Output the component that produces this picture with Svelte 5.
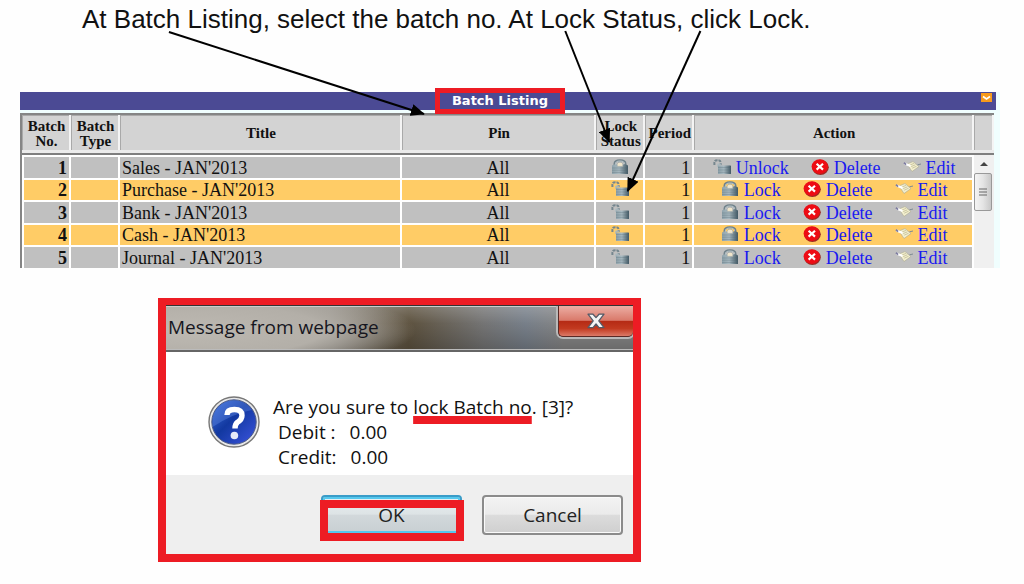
<script lang="ts">
	interface Batch {
		no: number;
		title: string;
		pin: string;
		locked: boolean;
		period: number;
	}

	const batches: Batch[] = [
		{ no: 1, title: "Sales - JAN'2013", pin: "All", locked: true, period: 1 },
		{ no: 2, title: "Purchase - JAN'2013", pin: "All", locked: false, period: 1 },
		{ no: 3, title: "Bank - JAN'2013", pin: "All", locked: false, period: 1 },
		{ no: 4, title: "Cash - JAN'2013", pin: "All", locked: false, period: 1 },
		{ no: 5, title: "Journal - JAN'2013", pin: "All", locked: false, period: 1 },
	];
</script>

{#snippet lockIcon(locked: boolean)}
	{#if locked}
		<svg class="icon" width="18" height="16" viewBox="0 0 18 16" aria-hidden="true">
			<path d="M3.6 8V4.8Q3.6 1.4 9 1.4T14.4 4.8V8" fill="none" stroke="#6f8189" stroke-width="2.2" />
			<path d="M4.4 7V4.8Q4.4 2 9 2T13.6 4.8" fill="none" stroke="#c9d4d8" stroke-width="0.8" />
			<path d="M1 6.6L3 5.4H15L17 6.6V15H1Z" fill="url(#steel)" />
			<path d="M1 9H17M1 11.2H17M1 13.4H17" stroke="#4c626d" stroke-width="0.6" opacity="0.5" />
			<path d="M6.2 7.4V5.2Q6.2 3.2 9 3.2T11.8 5.2V7.4Z" fill="#f1e6cc" stroke="#8c9a9f" stroke-width="0.5" />
		</svg>
	{:else}
		<svg class="icon" width="18" height="16" viewBox="0 0 18 16" aria-hidden="true">
			<path d="M1.4 6V3.6Q1.4 1.2 4.5 1.2T7.6 3.6V6" fill="none" stroke="#75868e" stroke-width="2" stroke-dasharray="3 .8" />
			<path d="M5 8V5.4Q6.5 4.5 8 5.4" fill="none" stroke="#a9b8be" stroke-width="1.4" />
			<rect x="5" y="6.4" width="13" height="8.6" rx="0.6" fill="url(#steel)" />
			<path d="M5 8.6H18M5 11H18M5 13.3H18" stroke="#4c626d" stroke-width="0.6" opacity="0.5" />
		</svg>
	{/if}
{/snippet}

<main class="guide">
	<p class="guide__step">At Batch Listing, select the batch no. At Lock Status, click Lock.</p>

	<section class="listing" aria-label="Batch Listing">
		<div class="listing__bar">
			<h2 class="listing__title">Batch Listing</h2>
			<button type="button" class="listing__toggle" aria-label="Collapse">
				<svg width="11" height="8" viewBox="0 0 11 8"><path d="M2 2.5L5.5 5L9 2.5" fill="none" stroke="#fff" stroke-width="1.6" /></svg>
			</button>
		</div>

		<table class="batches">
			<colgroup>
				<col class="col-small" />
				<col class="col-small" />
				<col class="col-title" />
				<col class="col-pin" />
				<col class="col-small" />
				<col class="col-small" />
				<col />
				<col class="col-scroll" />
			</colgroup>
			<thead>
				<tr>
					<th scope="col">Batch<br />No.</th>
					<th scope="col">Batch<br />Type</th>
					<th scope="col">Title</th>
					<th scope="col">Pin</th>
					<th scope="col">Lock<br />Status</th>
					<th scope="col">Period</th>
					<th scope="col">Action</th>
					<th></th>
				</tr>
			</thead>
			<tbody>
				{#each batches as batch, i}
					<tr>
						<td class="no">{batch.no}</td>
						<td></td>
						<td>{batch.title}</td>
						<td class="center">{batch.pin}</td>
						<td class="center">{@render lockIcon(batch.locked)}</td>
						<td class="period">{batch.period}</td>
						<td>
							<div class="actions">
								<a href="#lock">{@render lockIcon(!batch.locked)}{batch.locked ? "Unlock" : "Lock"}</a>
								<a href="#delete">
									<svg class="icon" width="18" height="16" viewBox="0 0 18 16" aria-hidden="true">
										<ellipse cx="9.4" cy="8.3" rx="8.4" ry="7.6" fill="#9c2a24" />
										<ellipse cx="8.8" cy="7.6" rx="8.2" ry="7.3" fill="#ed0c14" />
										<path d="M5.6 4.8L12 10.6M12 4.8L5.6 10.6" stroke="#fff" stroke-width="2.2" />
									</svg>Delete</a>
								<a href="#edit">
									<svg class="icon" width="18" height="16" viewBox="0 0 18 16" aria-hidden="true">
										<path d="M4 5L10 2.6L16 7.5L9 12.5Z" fill="#f3efcf" stroke="#aaa890" stroke-width="0.6" />
										<path d="M7 6L11 4.4M8.2 7.6L12.4 5.8M9.2 9.2L13.6 7.2" stroke="#b9b48c" stroke-width="0.7" />
										<path d="M1.5 4.5L7.5 7" stroke="#fff" stroke-width="2" />
										<path d="M1 3.6L3 5.6" stroke="#7c7ba0" stroke-width="1.8" />
										<path d="M14.5 5.8L18 5" stroke="#7d8b94" stroke-width="1" />
									</svg>Edit</a>
							</div>
						</td>
						{#if i === 0}
							<td class="scroll" rowspan={batches.length}>
								<button type="button" class="scroll__up" aria-label="Scroll up">
									<svg width="8" height="4" viewBox="0 0 8 4"><path d="M0 4L4 0L8 4Z" fill="#444" /></svg>
								</button>
								<div class="scroll__thumb">
									<svg width="8" height="9" viewBox="0 0 8 9"><path d="M0 1H8M0 4H8M0 7H8" stroke="#666" /></svg>
								</div>
							</td>
						{/if}
					</tr>
				{/each}
			</tbody>
		</table>
	</section>

	<div class="dialog" role="dialog" aria-labelledby="dialog-title">
		<header class="dialog__header">
			<h2 class="dialog__title" id="dialog-title">Message from webpage</h2>
			<button type="button" class="dialog__close" aria-label="Close">
				<svg width="20" height="18" viewBox="0 0 20 18">
					<path d="M2 2.2H7L10 5.6L13 2.2H18L12.8 8.8L18 15.6H13L10 12L7 15.6H2L7.2 8.8Z" fill="#f4f4f4" stroke="#555a66" stroke-width="1.3" stroke-linejoin="round" />
				</svg>
			</button>
		</header>
		<div class="dialog__body">
			<svg class="dialog__icon" width="52" height="54" viewBox="0 0 52 54" aria-hidden="true">
				<circle cx="26" cy="27" r="25" fill="#e9e9e9" stroke="#777" stroke-width="1.4" />
				<circle cx="26" cy="27" r="22.2" fill="url(#ball)" stroke="#4f5d86" />
				<path d="M4.5 27A21.5 21.5 0 0 1 44 15Q26 18 4.5 32Z" fill="#6d95ec" opacity="0.35" />
				<path d="M19 20Q19 14.5 26.4 14.5Q34 14.5 34 20.5Q34 24.5 29.5 27.2Q27 29 27 33.5" fill="none" stroke="#fff" stroke-width="5.4" />
				<circle cx="26.4" cy="40.5" r="3.8" fill="#e6ebf8" />
			</svg>
			<div class="dialog__text">
				<p>Are you sure to <span class="marked">lock Batch no</span>. [3]?</p>
				<p class="amount">Debit :<span>0.00</span></p>
				<p class="amount">Credit:<span>0.00</span></p>
			</div>
		</div>
		<footer class="dialog__footer">
			<div class="highlighted">
				<button type="button" class="button button--default">OK</button>
			</div>
			<button type="button" class="button">Cancel</button>
		</footer>
	</div>

	<svg class="arrows" aria-hidden="true">
		<defs>
			<marker id="head" markerUnits="userSpaceOnUse" markerWidth="14" markerHeight="12" refX="13" refY="6" orient="auto">
				<path d="M0 0L14 6L0 12Z" />
			</marker>
			<linearGradient id="steel">
				<stop offset="0" stop-color="#8fa3ac" />
				<stop offset="0.45" stop-color="#a9bac1" />
				<stop offset="1" stop-color="#425965" />
			</linearGradient>
			<linearGradient id="ball" x1="0" y1="0" x2="1" y2="1">
				<stop offset="0" stop-color="#3c6fdc" />
				<stop offset="0.45" stop-color="#1238a0" />
				<stop offset="1" stop-color="#3c55e0" />
			</linearGradient>
		</defs>
		<line x1="16.5%" y1="32" x2="41.4%" y2="114" marker-end="url(#head)" />
		<line x1="55.2%" y1="31" x2="59.5%" y2="142" marker-end="url(#head)" />
		<line x1="68.4%" y1="31" x2="61.3%" y2="191" marker-end="url(#head)" />
	</svg>
</main>

<style>
	:global(body) {
		margin: 0;
		background: #fefefe;
	}

	.guide {
		position: relative;
		padding: 4px 24px 23px 20px;
		color: #111;
		font-family: "Liberation Serif", "Times New Roman", serif;
	}

	.guide__step {
		margin: 0 0 58px 62px;
		font: 26px/30px "Liberation Sans", Arial, sans-serif;
		white-space: nowrap;
	}

	.arrows {
		position: absolute;
		top: 0;
		left: 0;
		width: 100%;
		height: 200px;
		pointer-events: none;
	}

	.arrows line {
		stroke: #000;
		stroke-width: 2;
	}

	.listing {
		background: #f0fefe;
	}

	.listing__bar {
		position: relative;
		display: flex;
		justify-content: center;
		align-items: center;
		height: 18px;
		margin: 0 4px 3px 0;
		background: #4b4a94;
	}

	.listing__title {
		margin: -6px 16px -6px 0;
		padding: 0 12px;
		border: 5px solid #ed1c24;
		color: #fff;
		font: bold 13px/16px "DejaVu Sans", Verdana, sans-serif;
	}

	.listing__toggle {
		position: absolute;
		top: 1px;
		right: 4px;
		display: flex;
		align-items: center;
		justify-content: center;
		width: 11px;
		height: 9px;
		padding: 0;
		border: 0;
		background: #f79a1c;
	}

	.batches {
		width: calc(100% - 6px);
		table-layout: fixed;
		border-collapse: separate;
		border-spacing: 0;
		border-left: 2px solid #858585;
		background: #fff;
		font-size: 18px;
		line-height: 18px;
	}

	.col-small {
		width: 49px;
	}

	.col-title {
		width: 29%;
	}

	.col-pin {
		width: 20%;
	}

	.col-scroll {
		width: 20px;
	}

	th {
		height: 37px;
		padding: 0 0 1px;
		border-top: 2px solid #858585;
		border-bottom: 2px solid #7f7f7f;
		background: #d3d3d3;
		box-shadow: inset 0 -3px #ebebeb, inset -2px 0 #f4f4f4, inset 1px 1px #a9a9a9;
		font-size: 15px;
		line-height: 15px;
	}

	td {
		height: 21px;
		padding: 0 2px;
		border-top: 2px solid #fff;
		border-right: 2px solid #fff;
		background: #c0c0c0;
		white-space: nowrap;
	}

	tbody tr:nth-child(even) td {
		height: 20px;
		background: #ffcc66;
	}

	td:first-child {
		border-left: 2px solid #fff;
	}

	.no {
		font-weight: bold;
		text-align: right;
	}

	.period {
		text-align: right;
	}

	.center {
		text-align: center;
	}

	.icon {
		display: inline-block;
		flex: none;
		vertical-align: top;
	}

	.actions {
		display: flex;
		justify-content: center;
		gap: 22px;
		padding-left: 2px;
	}

	.actions a {
		display: flex;
		gap: 5px;
		color: #1a1af0;
		text-decoration: none;
	}

	.scroll {
		padding: 0;
		border: 0;
		background: #f0f0f0;
		vertical-align: top;
	}

	.scroll__up {
		display: flex;
		align-items: center;
		justify-content: center;
		width: 100%;
		height: 18px;
		padding: 0;
		border: 0;
		background: #f0f0f0;
	}

	.scroll__thumb {
		display: flex;
		align-items: center;
		justify-content: center;
		height: 36px;
		margin-right: 2px;
		border: 1px solid #999;
		border-radius: 2px;
		background: linear-gradient(to right, #f4f4f4, #e4e4e4 50%, #c8c8c8);
	}

	.dialog {
		max-width: 467px;
		margin: 30px 0 0 138px;
		border: solid #ed1c24;
		border-width: 7px 8px 8px;
		background: #fff;
		font-family: "Open Sans", "Noto Sans", sans-serif;
		font-size: 19px;
		line-height: 25px;
	}

	.dialog__header {
		display: flex;
		align-items: flex-start;
		justify-content: space-between;
		height: 44px;
		border-top: 1px solid #333;
		border-bottom: 2px solid #666;
		background:
			radial-gradient(ellipse 230px 44px at 20px 24px, #bdb9b2 0, #b3afa8 60%, transparent 100%),
			linear-gradient(to bottom, #fff3, #fff0 40%, #0003),
			linear-gradient(to right, #99958e 0, #87827a 35%, #5d523f 52%, #747474 68%, #777f89 77%, #858585 85%);
		box-shadow: inset 0 1px #ccc, inset 0 -1px #bbb;
	}

	.dialog__title {
		margin: 0;
		padding: 9px 2px;
		color: #16161e;
		font-size: 19px;
		font-weight: normal;
	}

	.dialog__close {
		display: flex;
		align-items: center;
		justify-content: center;
		width: 75px;
		height: 31px;
		padding: 0;
		border: 1px solid #5a2a26;
		border-width: 0 0 1px 1px;
		border-radius: 0 0 5px 5px;
		background: linear-gradient(to bottom, #ecaea4, #d9796a 48%, #b52a14 50%, #c23a20 75%, #dc7a68);
		box-shadow: 0 0 0 2px #b9b9b9;
		clip-path: inset(0 0 -2px -2px);
	}

	.dialog__body {
		display: flex;
		gap: 13px;
		padding: 43px 8px 5px 42px;
	}

	.dialog__icon {
		flex: none;
	}

	.dialog__text p {
		margin: 0;
	}

	.marked {
		text-decoration: underline 8px #ed1c24;
		text-decoration-skip-ink: none;
		text-underline-offset: 2px;
	}

	.dialog__text .amount {
		display: flex;
		gap: 14px;
		padding-left: 5px;
	}

	.dialog__footer {
		display: flex;
		justify-content: flex-end;
		gap: 20px;
		padding: 20px 10px 19px;
		background: #efefef;
	}

	.button {
		width: 141px;
		height: 40px;
		padding: 0;
		border: 2px solid #8b8b8b;
		border-radius: 4px;
		background: linear-gradient(to bottom, #f3f3f3, #ebebeb 48%, #dcdcdc 50%, #cfcfcf);
		box-shadow: inset 0 0 0 1px #fafafa;
		color: #222;
		font: inherit;
	}

	.button--default {
		border-color: #3a9cc8;
		background: linear-gradient(to bottom, #e8f0f3, #dde3e5 48%, #d2d8db 50%, #c8cfd2);
		box-shadow: inset 0 0 0 2px #55c8ee;
	}

	.highlighted {
		position: relative;
	}

	.highlighted::after {
		content: "";
		position: absolute;
		inset: 5px -2px -6px -1px;
		border: 8px solid #ed1c24;
		pointer-events: none;
	}
</style>
